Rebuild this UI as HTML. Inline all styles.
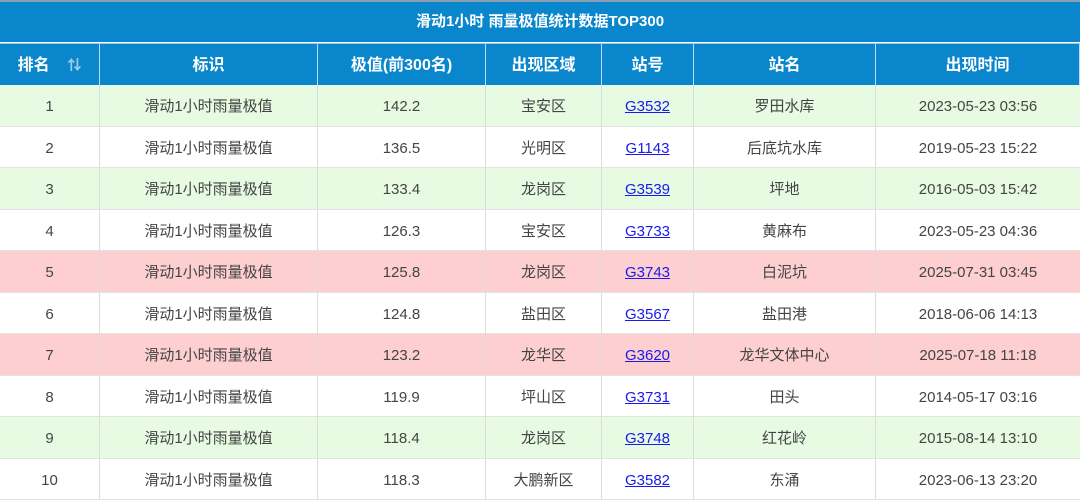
<!DOCTYPE html>
<html><head><meta charset="utf-8"><style>
*{margin:0;padding:0;box-sizing:border-box}
body{width:1080px;height:496px;overflow:hidden;background:#fff;font-family:"Liberation Sans","Noto Sans CJK SC",sans-serif}
.title{position:absolute;left:0;top:0;width:1080px;height:42px;background:#0a86cd;border-top:2px solid #8aa0b0;color:#fff;font-weight:bold;font-size:15px;text-align:center;line-height:40px}
.row{position:absolute;left:0;width:1080px;display:flex}
.row div{height:100%;text-align:center;border-right:1px solid #dcdcdc;font-size:15px;color:#444;line-height:43px}
.row div span,.row div a{display:inline-block;vertical-align:middle;line-height:20px}
.hd{top:43px;height:42px;background:#0a86cd;border-top:1px solid #9cc9ea}
.hd div{color:#fff!important;font-weight:bold;font-size:16px;border-right:1px solid #b9dcf3!important}
.c1{width:100px}.c2{width:218px}.c3{width:168px}.c4{width:116px}.c5{width:92px}.c6{width:182px}.c7{width:204px;border-right:none!important}
.g{background:#e6fbe2}.r{background:#fdcfd0}.w{background:#fff}
.b{border-bottom:1px solid #e2e2e2}
a{color:#1a1aee;text-decoration:underline}
</style></head><body>
<div class="title">滑动1小时 雨量极值统计数据TOP300</div>
<div class="row hd"><div class="c1"><span>排名&nbsp;&nbsp;&nbsp;&nbsp;<b style="color:#9fcbe9;font-size:14px">⇅</b></span></div><div class="c2"><span>标识</span></div><div class="c3"><span>极值(前300名)</span></div><div class="c4"><span>出现区域</span></div><div class="c5"><span>站号</span></div><div class="c6"><span>站名</span></div><div class="c7"><span>出现时间</span></div></div>
<div id="rows"></div>
<script>
var d=[["g","1","142.2","宝安区","G3532","罗田水库","2023-05-23 03:56"],["w","2","136.5","光明区","G1143","后底坑水库","2019-05-23 15:22"],["g","3","133.4","龙岗区","G3539","坪地","2016-05-03 15:42"],["w","4","126.3","宝安区","G3733","黄麻布","2023-05-23 04:36"],["r","5","125.8","龙岗区","G3743","白泥坑","2025-07-31 03:45"],["w","6","124.8","盐田区","G3567","盐田港","2018-06-06 14:13"],["r","7","123.2","龙华区","G3620","龙华文体中心","2025-07-18 11:18"],["w","8","119.9","坪山区","G3731","田头","2014-05-17 03:16"],["g","9","118.4","龙岗区","G3748","红花岭","2015-08-14 13:10"],["w","10","118.3","大鹏新区","G3582","东涌","2023-06-13 23:20"]];
var h="";d.forEach(function(r,i){var t=85+i*41.5;h+='<div class="row b '+r[0]+'" style="top:'+t+'px;height:41.5px"><div class="c1"><span>'+r[1]+'</span></div><div class="c2"><span>滑动1小时雨量极值</span></div><div class="c3"><span>'+r[2]+'</span></div><div class="c4"><span>'+r[3]+'</span></div><div class="c5"><a>'+r[4]+'</a></div><div class="c6"><span>'+r[5]+'</span></div><div class="c7"><span>'+r[6]+'</span></div></div>'});
document.getElementById("rows").innerHTML=h;
</script>
</body></html>
